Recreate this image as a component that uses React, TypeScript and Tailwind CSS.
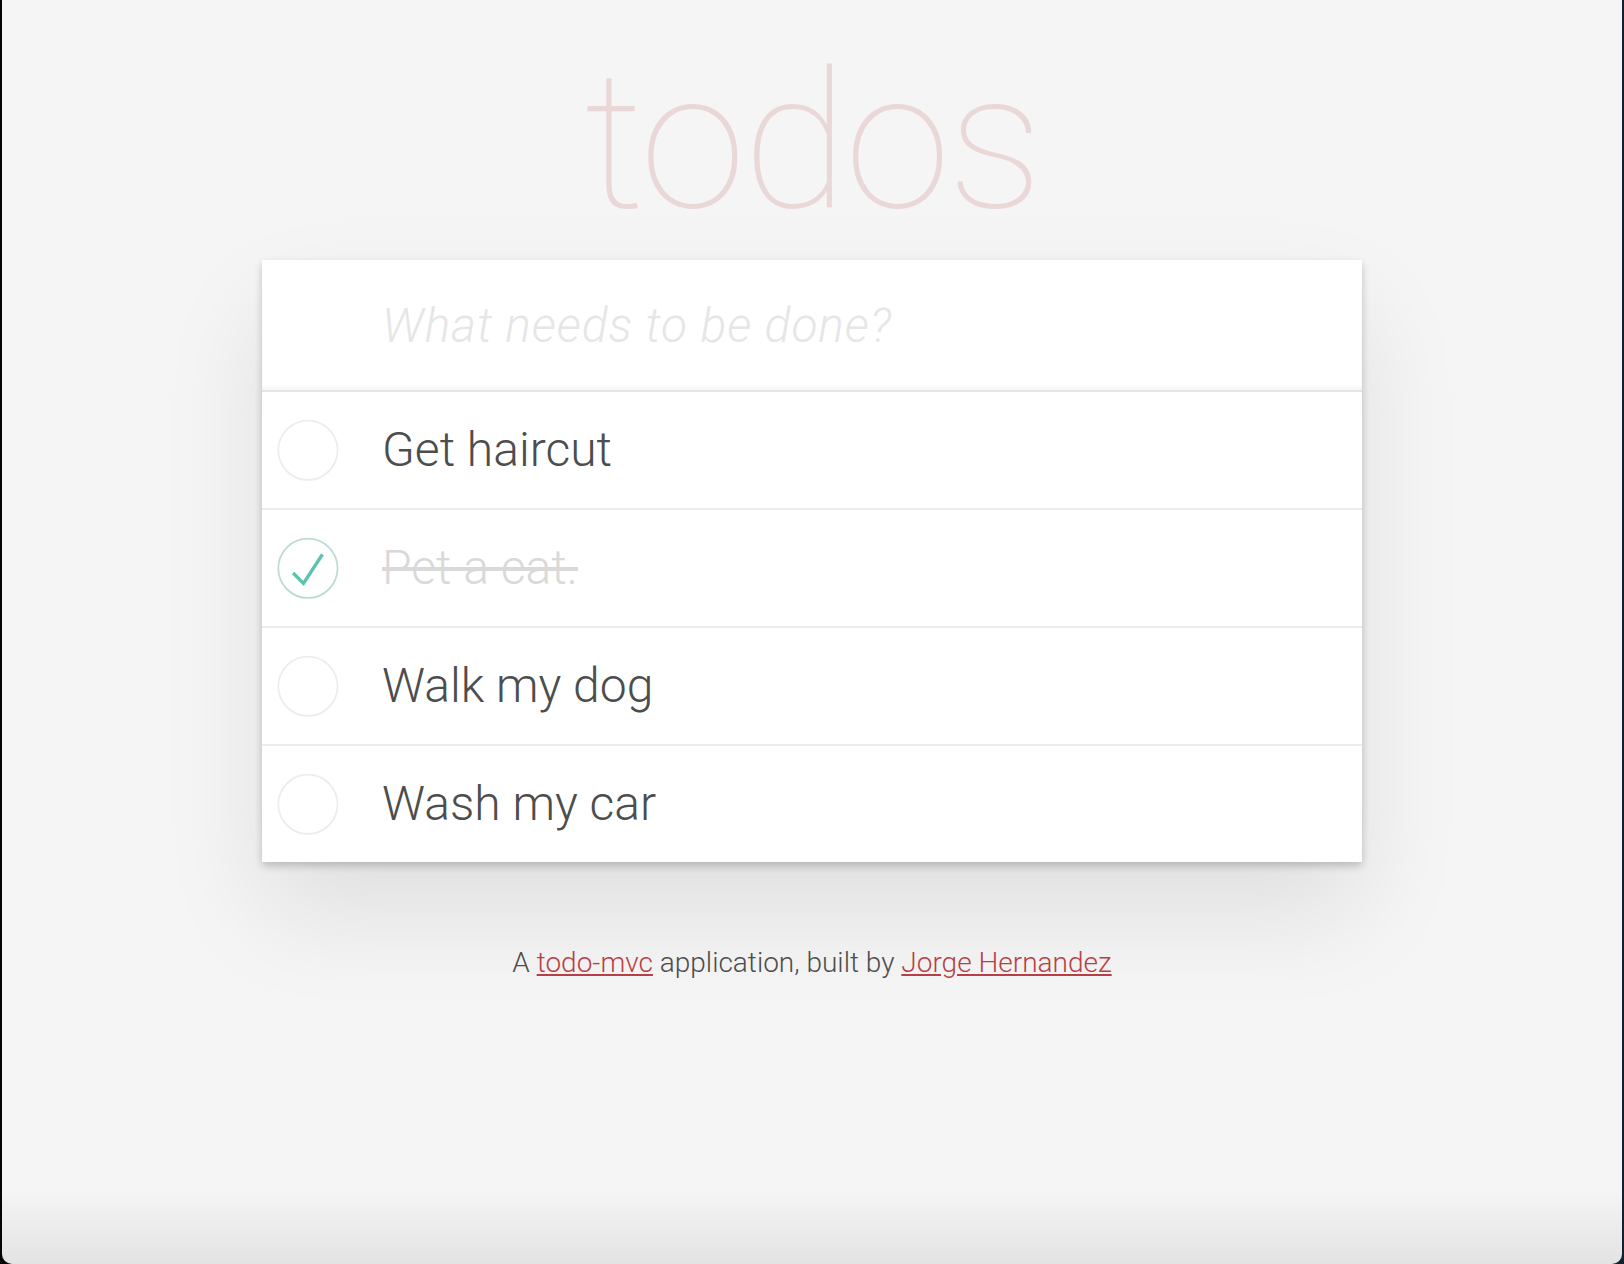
import { useState } from "react";

type Todo = { id: number; title: string; done: boolean };

const initialTodos: Todo[] = [
  { id: 1, title: "Get haircut", done: false },
  { id: 2, title: "Pet a cat.", done: true },
  { id: 3, title: "Walk my dog", done: false },
  { id: 4, title: "Wash my car", done: false },
];

// same circle + check mark as the classic todomvc toggle
function Toggle({ done, onClick }: { done: boolean; onClick: () => void }) {
  return (
    <button onClick={onClick} className="shrink-0 cursor-pointer" aria-label="Toggle todo">
      <svg width="80" height="80" viewBox="-10 -18 100 135" className="block">
        <circle
          cx="50"
          cy="50"
          r="50"
          fill="none"
          stroke={done ? "#bddad5" : "#ededed"}
          strokeWidth="3"
        />
        {done && <path fill="#5dc2af" d="M72 25L42 71 27 56l-4 4 20 20 34-52z" />}
      </svg>
    </button>
  );
}

export default function App() {
  const [todos, setTodos] = useState<Todo[]>(initialTodos);
  const [draft, setDraft] = useState("");

  const toggle = (id: number) =>
    setTodos((list) => list.map((t) => (t.id === id ? { ...t, done: !t.done } : t)));

  const addTodo = (e: React.KeyboardEvent<HTMLInputElement>) => {
    if (e.key !== "Enter" || !draft.trim()) return;
    setTodos((list) => [...list, { id: Date.now(), title: draft.trim(), done: false }]);
    setDraft("");
  };

  return (
    <div className="h-[1264px] bg-[linear-gradient(to_right,#050505_50%,#0f2230_50%)]">
      <div className="mx-[2px] h-full overflow-hidden rounded-b-[10px] bg-[linear-gradient(to_bottom,#f5f5f5_calc(100%-75px),#e3e3e3)] pt-[42px] font-['Helvetica_Neue',Roboto,'Liberation_Sans',sans-serif] font-light text-[#4d4d4d]">
        <h1 className="h-[200px] text-center text-[192px] leading-[200px] font-thin tracking-[-3px] text-[rgba(175,47,47,0.15)]">
          todos
        </h1>

        <section className="mx-auto mt-[18px] w-[1100px] bg-white shadow-[0_4px_8px_0_rgba(0,0,0,0.2),0_50px_100px_0_rgba(0,0,0,0.09)]">
          <input
            value={draft}
            onChange={(e) => setDraft(e.target.value)}
            onKeyDown={addTodo}
            placeholder="What needs to be done?"
            className="block h-[130px] w-full bg-transparent pr-[30px] pl-[120px] text-[48px] font-light text-[#4d4d4d] outline-none shadow-[inset_0_-4px_2px_rgba(0,0,0,0.03)] placeholder:font-light placeholder:tracking-[0.9px] placeholder:text-[#e6e6e6] placeholder:italic"
          />

          <ul className="border-t-2 border-[#e6e6e6]">
            {todos.map((todo) => (
              <li
                key={todo.id}
                className="flex h-[118px] items-center border-b-2 border-[#ededed] last:h-[116px] last:border-b-0"
              >
                <Toggle done={todo.done} onClick={() => toggle(todo.id)} />
                <span
                  className={
                    todo.done
                      ? "pl-[40px] text-[48px] leading-[58px] text-[#d9d9d9] line-through"
                      : "pl-[40px] text-[48px] leading-[58px] text-[#4d4d4d]"
                  }
                >
                  {todo.title}
                </span>
              </li>
            ))}
          </ul>
        </section>

        <p className="mt-[85px] text-center text-[28px] leading-[32px]">
          A{" "}
          <a href="#" className="text-[#b83f45] underline">
            todo-mvc
          </a>{" "}
          application, built by{" "}
          <a href="#" className="text-[#b83f45] underline">
            Jorge Hernandez
          </a>
        </p>
      </div>
    </div>
  );
}
